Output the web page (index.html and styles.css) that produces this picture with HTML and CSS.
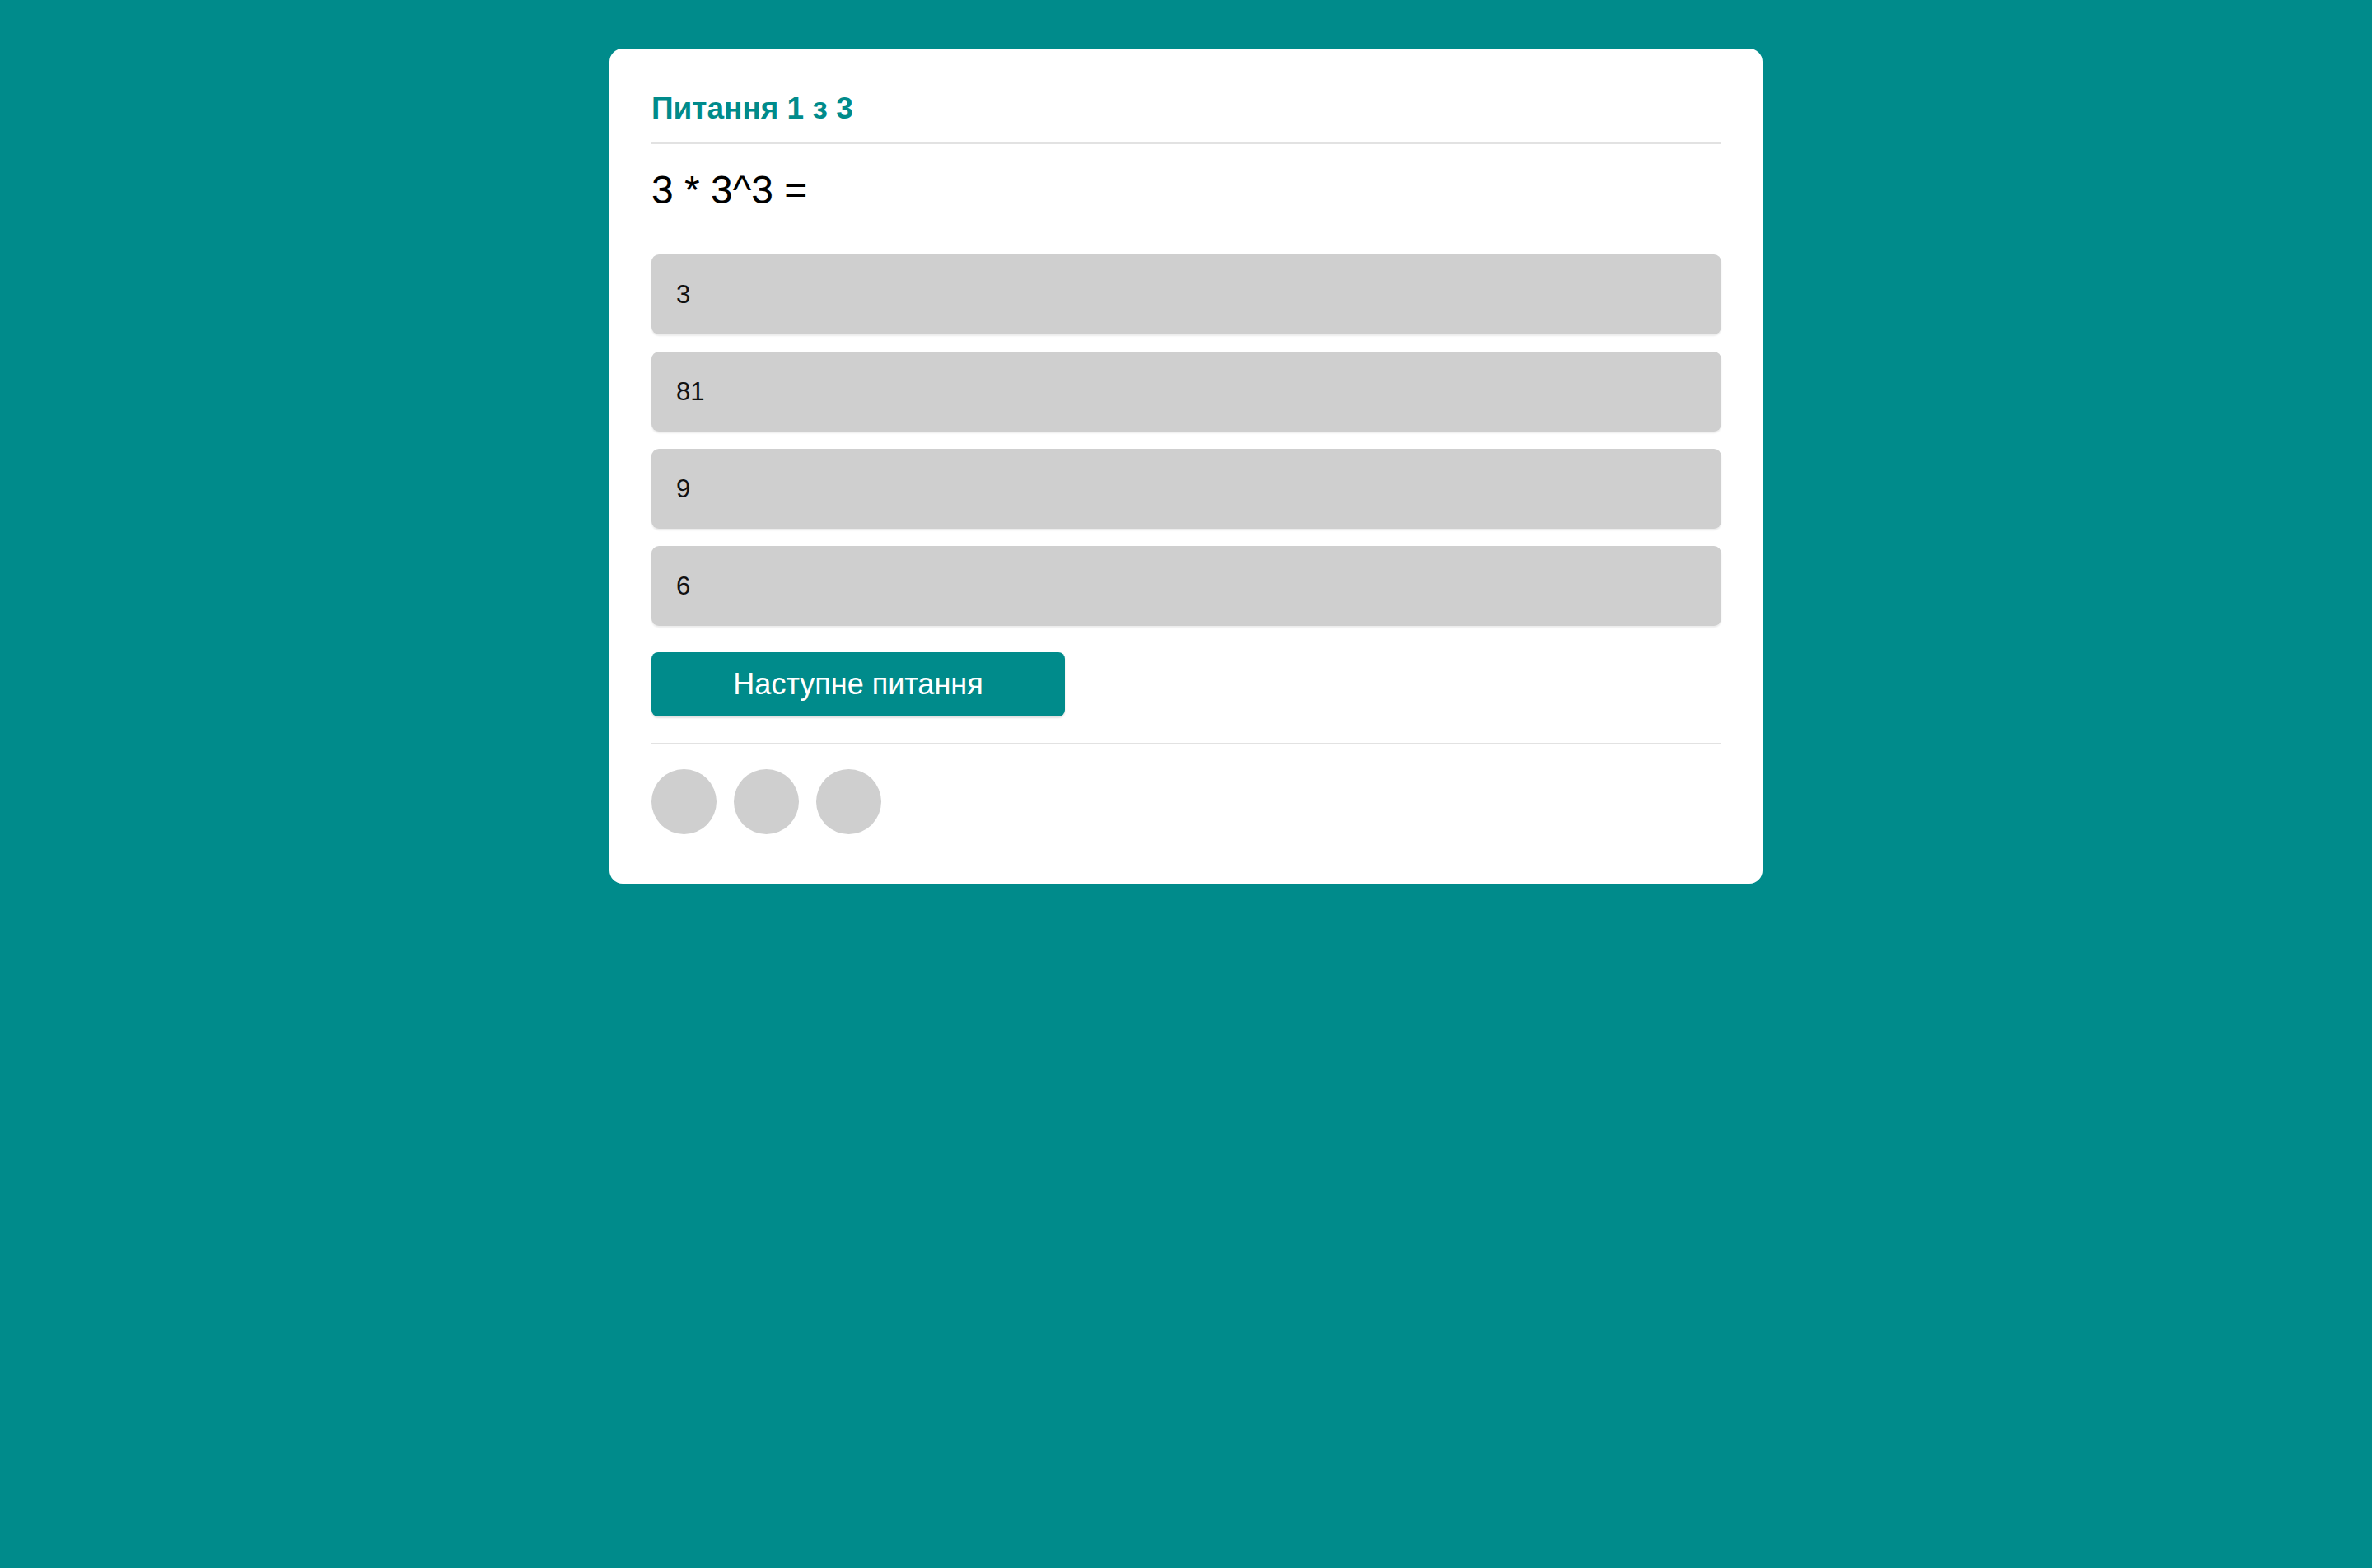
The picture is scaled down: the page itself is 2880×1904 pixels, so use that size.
FILE: index.html
```html
<!DOCTYPE html>
<html lang="uk">
<head>
<meta charset="utf-8">
<title>Питання 1 з 3</title>
<link rel="stylesheet" href="styles.css">
</head>
<body>
<main class="quiz">
  <h2 class="quiz-header">Питання 1 з 3</h2>
  <div class="question">3 * 3^3 =</div>
  <div class="options">
    <div class="option">3</div>
    <div class="option">81</div>
    <div class="option">9</div>
    <div class="option">6</div>
  </div>
  <button class="next-btn">Наступне питання</button>
  <div class="progress">
    <span class="dot"></span>
    <span class="dot"></span>
    <span class="dot"></span>
  </div>
</main>
</body>
</html>
```
FILE: styles.css
```css
html, body {
  margin: 0;
  padding: 0;
}
body {
  background: #008b8b;
  font-family: "Liberation Sans", Arial, sans-serif;
  min-height: 1904px;
  padding-top: 59px;
  box-sizing: border-box;
}
.quiz {
  width: 1400px;
  margin: 0 auto;
  background: #ffffff;
  border-radius: 16px;
  padding: 52px 50px 60px 51px;
  box-sizing: border-box;
}
.quiz-header {
  margin: 0;
  font-size: 37px;
  font-weight: bold;
  color: #008b8b;
  padding-bottom: 20px;
  border-bottom: 2px solid #e2e2e2;
}
.question {
  margin-top: 28px;
  font-size: 48px;
  color: #000;
}
.options {
  margin-top: 51px;
  display: flex;
  flex-direction: column;
  gap: 21px;
}
.option {
  background: #cfcfcf;
  border-radius: 9px;
  height: 97px;
  box-sizing: border-box;
  display: flex;
  align-items: center;
  padding-left: 30px;
  font-size: 31px;
  color: #111;
  box-shadow: 0 2px 2px rgba(0, 0, 0, 0.08);
}
.next-btn {
  display: block;
  margin-top: 32px;
  width: 502px;
  height: 78px;
  border: none;
  border-radius: 8px;
  background: #008b8b;
  color: #ffffff;
  font-family: "Liberation Sans", Arial, sans-serif;
  font-size: 36px;
  box-shadow: 0 2px 2px rgba(0, 0, 0, 0.12);
  cursor: pointer;
}
.progress {
  margin-top: 32px;
  border-top: 2px solid #e2e2e2;
  padding-top: 30px;
  display: flex;
  gap: 21px;
}
.dot {
  width: 79px;
  height: 79px;
  border-radius: 50%;
  background: #cfcfcf;
}
```
